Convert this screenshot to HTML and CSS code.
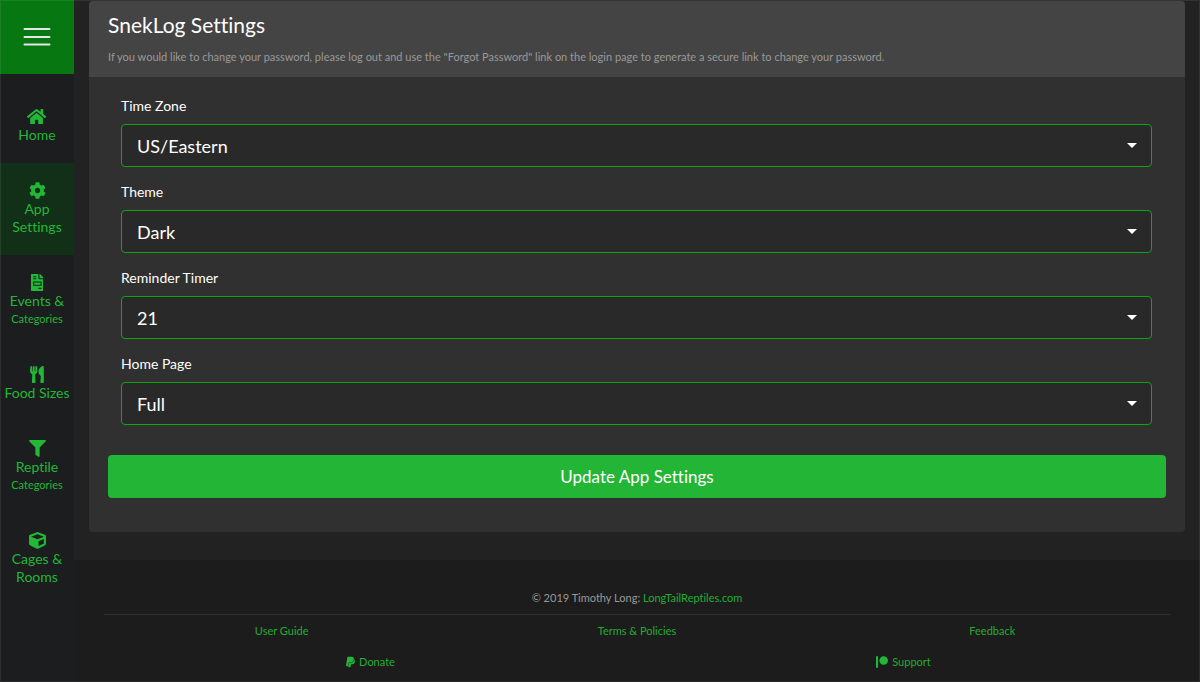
FILE: index.html
```html
<!DOCTYPE html>
<html lang="en">
<head>
<meta charset="utf-8">
<meta name="viewport" content="width=device-width, initial-scale=1">
<title>SnekLog Settings</title>
<link rel="stylesheet" href="styles.css">
</head>
<body>
<div class="app">
  <aside class="sidebar">
    <button class="menu-button" type="button" aria-label="Menu">
      <svg class="menu-icon" viewBox="0 0 28 20" aria-hidden="true"><path d="M1.5 2h25M1.5 10h25M1.5 17.5h25"/></svg>
    </button>
    <nav class="nav">
      <a class="nav-item" href="#home">
        <svg class="nav-icon" viewBox="0 0 576 512" aria-hidden="true"><path d="M280.37 148.26L96 300.11V464a16 16 0 0 0 16 16l112.06-.29a16 16 0 0 0 15.92-16V368a16 16 0 0 1 16-16h64a16 16 0 0 1 16 16v95.64a16 16 0 0 0 16 16.05L464 480a16 16 0 0 0 16-16V300L295.67 148.26a12.19 12.19 0 0 0-15.3 0zM571.6 251.47L488 182.56V44.05a12 12 0 0 0-12-12h-56a12 12 0 0 0-12 12v72.61L318.47 43a48 48 0 0 0-61 0L4.34 251.47a12 12 0 0 0-1.6 16.9l25.5 31A12 12 0 0 0 45.15 301l235.22-193.74a12.19 12.19 0 0 1 15.3 0L530.9 301a12 12 0 0 0 16.9-1.6l25.5-31a12 12 0 0 0-1.7-16.93z"/></svg>
        <span>Home</span>
      </a>
      <a class="nav-item nav-item-active" href="#settings" aria-current="page">
        <svg class="nav-icon" viewBox="0 0 512 512" aria-hidden="true"><path d="M487.4 315.7l-42.6-24.6c4.3-23.2 4.3-47 0-70.2l42.6-24.6c4.9-2.8 7.1-8.6 5.5-14-11.1-35.6-30-67.8-54.7-94.6-3.8-4.1-10-5.1-14.8-2.3L380.8 110c-17.9-15.4-38.5-27.3-60.8-35.1V25.8c0-5.6-3.9-10.5-9.4-11.7-36.7-8.2-74.3-7.8-109.2 0-5.5 1.2-9.4 6.1-9.4 11.7V75c-22.2 7.9-42.8 19.8-60.8 35.1L88.7 85.5c-4.9-2.8-11-1.9-14.8 2.3-24.7 26.7-43.6 58.9-54.7 94.6-1.7 5.4.6 11.2 5.5 14L67.3 221c-4.3 23.2-4.3 47 0 70.2l-42.6 24.6c-4.9 2.8-7.1 8.6-5.5 14 11.1 35.6 30 67.8 54.7 94.6 3.8 4.1 10 5.1 14.8 2.3l42.6-24.6c17.9 15.4 38.5 27.3 60.8 35.1v49.2c0 5.6 3.9 10.5 9.4 11.7 36.7 8.2 74.3 7.8 109.2 0 5.5-1.2 9.4-6.1 9.4-11.7v-49.2c22.2-7.9 42.8-19.8 60.8-35.1l42.6 24.6c4.9 2.8 11 1.9 14.8-2.3 24.7-26.7 43.6-58.9 54.7-94.6 1.5-5.5-.7-11.3-5.6-14.1zM256 336c-44.1 0-80-35.9-80-80s35.9-80 80-80 80 35.9 80 80-35.9 80-80 80z"/></svg>
        <span>App Settings</span>
      </a>
      <a class="nav-item" href="#events">
        <svg class="nav-icon" viewBox="0 0 384 512" aria-hidden="true"><path d="M288 256H96v64h192v-64zm89-151L279.1 7c-4.5-4.5-10.6-7-17-7H256v128h128v-6.1c0-6.3-2.5-12.4-7-16.9zm-153 31V0H24C10.7 0 0 10.7 0 24v464c0 13.3 10.7 24 24 24h336c13.3 0 24-10.7 24-24V160H248c-13.2 0-24-10.8-24-24zM64 72c0-4.42 3.58-8 8-8h80c4.42 0 8 3.58 8 8v16c0 4.42-3.58 8-8 8H72c-4.42 0-8-3.58-8-8V72zm0 64c0-4.42 3.58-8 8-8h80c4.42 0 8 3.58 8 8v16c0 4.42-3.58 8-8 8H72c-4.42 0-8-3.58-8-8v-16zm256 304c0 4.42-3.58 8-8 8h-80c-4.42 0-8-3.58-8-8v-16c0-4.42 3.58-8 8-8h80c4.42 0 8 3.58 8 8v16zm0-200v96c0 8.84-7.16 16-16 16H80c-8.84 0-16-7.16-16-16v-96c0-8.84 7.16-16 16-16h224c8.84 0 16 7.16 16 16z"/></svg>
        <span>Events &amp;</span>
        <small class="nav-sub">Categories</small>
      </a>
      <a class="nav-item" href="#food">
        <svg class="nav-icon" viewBox="0 0 416 512" aria-hidden="true"><path d="M207.9 15.2c.8 4.7 16.1 94.5 16.1 128.8 0 52.3-27.8 89.6-68.9 104.6L168 486.7c.7 13.7-10.2 25.3-24 25.3H80c-13.7 0-24.7-11.5-24-25.3l12.9-238.1C27.7 233.6 0 196.2 0 144 0 109.6 15.3 19.9 16.1 15.2 19.3-5.1 61.4-5.4 64 16.3v141.2c1.3 3.4 15.1 3.2 16 0 1.4-25.3 7.9-139.2 8-141.8 3.3-20.8 44.7-20.8 47.9 0 .2 2.7 6.6 116.5 8 141.8.9 3.2 14.8 3.4 16 0V16.3c2.6-21.6 44.8-21.4 48-1.1zm119.2 285.7l-15 185.1c-1.2 14 9.9 26 23.9 26h56c13.3 0 24-10.7 24-24V24c0-13.2-10.7-24-24-24-82.5 0-221.4 178.5-64.9 300.9z"/></svg>
        <span>Food Sizes</span>
      </a>
      <a class="nav-item" href="#reptile">
        <svg class="nav-icon" viewBox="0 0 512 512" aria-hidden="true"><path d="M487.976 0H24.028C2.71 0-8.047 25.866 7.058 40.971L192 225.941V432c0 7.831 3.821 15.17 10.237 19.662l80 55.98C298.02 518.69 320 507.493 320 487.98V225.941l184.947-184.97C520.021 25.896 509.338 0 487.976 0z"/></svg>
        <span>Reptile</span>
        <small class="nav-sub">Categories</small>
      </a>
      <a class="nav-item" href="#cages">
        <svg class="nav-icon" viewBox="0 0 512 512" aria-hidden="true"><path d="M239.1 6.3l-208 78c-18.7 7-31.1 25-31.1 45v225.1c0 18.2 10.3 34.8 26.5 42.9l208 104c13.5 6.8 29.4 6.8 42.9 0l208-104c16.3-8.1 26.5-24.8 26.5-42.9V129.3c0-20-12.4-37.9-31.1-44.9l-208-78C262 2.2 250 2.2 239.1 6.3zM256 68.4l192 72v1.1l-192 78-192-78v-1.1l192-72zm32 356V275.5l160-65v133.9l-160 80z"/></svg>
        <span>Cages &amp; Rooms</span>
      </a>
    </nav>
  </aside>

  <div class="page">
    <main class="content">
      <section class="card">
        <header class="card-header">
          <h1 class="title">SnekLog Settings</h1>
          <p class="hint">If you would like to change your password, please log out and use the "Forgot Password" link on the login page to generate a secure link to change your password.</p>
        </header>
        <form class="form">
          <div class="fields">
            <div class="field">
              <label class="label" for="timezone">Time Zone</label>
              <div class="select-wrap">
                <select class="select" id="timezone"><option>US/Eastern</option></select>
                <svg class="caret" viewBox="0 0 10 5" aria-hidden="true"><path d="M0 0h10L5 5z"/></svg>
              </div>
            </div>
            <div class="field">
              <label class="label" for="theme">Theme</label>
              <div class="select-wrap">
                <select class="select" id="theme"><option>Dark</option></select>
                <svg class="caret" viewBox="0 0 10 5" aria-hidden="true"><path d="M0 0h10L5 5z"/></svg>
              </div>
            </div>
            <div class="field">
              <label class="label" for="reminder">Reminder Timer</label>
              <div class="select-wrap">
                <select class="select" id="reminder"><option>21</option></select>
                <svg class="caret" viewBox="0 0 10 5" aria-hidden="true"><path d="M0 0h10L5 5z"/></svg>
              </div>
            </div>
            <div class="field">
              <label class="label" for="homepage">Home Page</label>
              <div class="select-wrap">
                <select class="select" id="homepage"><option>Full</option></select>
                <svg class="caret" viewBox="0 0 10 5" aria-hidden="true"><path d="M0 0h10L5 5z"/></svg>
              </div>
            </div>
          </div>
          <button class="submit" type="button">Update App Settings</button>
        </form>
      </section>
    </main>

    <footer class="footer">
      <p class="copyright">© 2019 Timothy Long: <a class="link" href="#longtail">LongTailReptiles.com</a></p>
      <div class="footer-row">
        <a class="link" href="#guide">User Guide</a>
        <a class="link" href="#terms">Terms &amp; Policies</a>
        <a class="link" href="#feedback">Feedback</a>
      </div>
      <div class="footer-row">
        <a class="link icon-link" href="#donate">
          <svg class="link-icon" viewBox="0 0 384 512" aria-hidden="true"><path d="M111.4 295.9c-3.5 19.2-17.4 108.7-21.5 134-.3 1.8-1 2.5-3 2.5H12.3c-7.6 0-13.1-6.6-12.1-13.9L58.8 46.6c1.5-9.6 10.1-16.9 20-16.9 152.3 0 165.1-3.7 204 11.4 60.1 23.3 65.6 79.5 44 140.3-21.5 62.6-72.5 89.5-140.1 90.3-43.4.7-69.5-7-75.3 24.2zM357.1 152c-1.8-1.3-2.5-1.8-3 1.3-2 11.4-5.1 22.5-8.8 33.6-39.9 113.8-150.5 103.9-204.5 103.9-6.1 0-10.1 3.3-10.9 9.4-22.6 140.4-27.1 169.7-27.1 169.7-1 7.1 3.5 12.9 10.6 12.9h63.5c8.6 0 15.7-6.3 17.4-14.9.7-5.4-1.1 6.1 14.4-91.3 4.6-22 14.3-19.7 29.3-19.7 71 0 126.4-28.8 142.9-112.3 6.5-34.8 4.6-71.4-23.8-92.6z"/></svg>
          Donate
        </a>
        <a class="link icon-link" href="#support">
          <svg class="link-icon" viewBox="0 0 512 512" aria-hidden="true"><path d="M512 194.8c0 101.3-82.4 183.8-183.8 183.8-101.7 0-184.4-82.4-184.4-183.8 0-101.6 82.7-184.3 184.4-184.3C429.6 10.5 512 93.2 512 194.8zM0 501.5h90v-491H0v491z"/></svg>
          Support
        </a>
      </div>
    </footer>
  </div>
</div>
</body>
</html>
```
FILE: styles.css
```css
* {
  box-sizing: border-box;
}

body {
  margin: 0;
  background: #1c1c1c;
  color: #fff;
  font-family: Lato, "Liberation Sans", sans-serif;
  font-size: 14px;
  font-variant-ligatures: none;
}

/* Thin light frame drawn over the edges of the window */
body::after {
  content: "";
  position: fixed;
  inset: 0;
  border: 1px solid rgba(255, 255, 255, 0.08);
  pointer-events: none;
}

.app {
  display: flex;
  min-height: 100vh;
}

.sidebar {
  flex: none;
  width: 74px;
  background: #1b1d1f;
}

.menu-button {
  display: grid;
  place-items: center;
  width: 100%;
  height: 74px;
  padding: 0;
  border: 0;
  background: #067711;
}

.menu-icon {
  height: 20px;
  fill: none;
  stroke: #e6e6e6;
  stroke-width: 2;
  stroke-linecap: round;
}

.nav {
  padding-top: 15px;
}

.nav-item {
  display: flex;
  flex-direction: column;
  align-items: center;
  padding: 19px 2px;
  color: #23b737;
  line-height: 18px;
  text-align: center;
  text-decoration: none;
}

.nav-item-active {
  padding-inline: 8px;
  background: #122f18;
}

.nav-icon {
  height: 17px;
  margin-bottom: 1px;
  fill: currentColor;
}

.nav-sub {
  font-size: 11px;
}

.page {
  flex: 1;
  min-width: 0;
}

.content {
  padding: 1px 15px 28px;
  background: #222;
}

.card {
  overflow: hidden;
  border-radius: 4px;
  background: #303030;
}

.card-header {
  padding: 12px 19px;
  background: #444;
}

.title {
  margin: 0 0 12px;
  font-size: 21px;
  font-weight: 400;
  line-height: 24px;
}

.hint {
  margin: 0;
  color: #999;
  font-size: 11px;
  line-height: 16px;
}

.form {
  padding: 18px 19px 34px;
}

.fields {
  display: grid;
  gap: 14px;
  padding: 0 14px 30px 13px;
}

.label {
  display: block;
  margin-bottom: 8px;
  line-height: 21px;
}

.select-wrap {
  display: grid;
  align-items: center;
}

.select {
  grid-area: 1 / 1;
  width: 100%;
  height: 43px;
  padding: 0 15px;
  border: 1px solid #14a314;
  border-radius: 4px;
  appearance: none;
  background: #292929;
  color: #fff;
  font: inherit;
  font-size: 18px;
}

.caret {
  grid-area: 1 / 1;
  justify-self: end;
  width: 10px;
  margin-right: 15px;
  fill: #fff;
  pointer-events: none;
}

.submit {
  display: block;
  width: 100%;
  height: 43px;
  border: 0;
  border-radius: 4px;
  background: #23b536;
  color: #fff;
  font: inherit;
  font-size: 17px;
}

.footer {
  padding: 30px;
  padding-bottom: 12px;
  color: #999;
  font-size: 11px;
  line-height: 16px;
}

.copyright {
  margin: 0;
  padding-bottom: 8px;
  border-bottom: 1px solid #303030;
  text-align: center;
}

.link {
  color: #23ac35;
  text-decoration: none;
}

.footer-row {
  display: flex;
  padding-top: 8px;
}

.footer-row + .footer-row {
  padding-top: 15px;
}

.footer-row .link {
  flex: 1;
  text-align: center;
}

.footer-row .icon-link {
  display: flex;
  align-items: center;
  justify-content: center;
  gap: 4px;
}

.link-icon {
  height: 12px;
  fill: #23b737;
}
```
